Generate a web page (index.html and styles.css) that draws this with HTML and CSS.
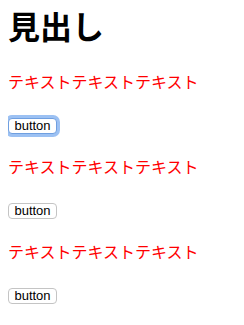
FILE: index.html
```html
<!DOCTYPE html>
<html lang="ja">
<head>
<meta charset="utf-8">
<link rel="stylesheet" href="styles.css">
</head>
<body>
<h1 class="title">見出し</h1>
<p class="text">テキストテキストテキスト</p>
<p class="row"><button class="btn btn-focus">button</button></p>
<p class="text">テキストテキストテキスト</p>
<p class="row"><button class="btn">button</button></p>
<p class="text">テキストテキストテキスト</p>
<p class="row"><button class="btn">button</button></p>
</body>
</html>
```
FILE: styles.css
```css
html, body {
  background: #fff;
}
body {
  margin: 8px;
  font-family: "Noto Sans CJK JP", sans-serif;
  color: #000;
}
.title {
  margin: 0;
  font-size: 32px;
  line-height: 34px;
  font-weight: 700;
}
.text {
  margin: 27px 0 0;
  font-size: 16px;
  line-height: 24px;
  color: #ff0000;
}
.row + .text {
  margin-top: 20px;
}
.row {
  margin: 25px 0 0;
  line-height: 16px;
  height: 16px;
}
.btn {
  display: block;
  box-sizing: border-box;
  width: 49px;
  height: 16px;
  padding: 0;
  margin: 0;
  font-family: "Liberation Sans", Arial, sans-serif;
  font-size: 13px;
  line-height: 14px;
  color: #000;
  background: #fff;
  border: 1px solid #c4c4c4;
  border-radius: 4px;
}
.btn-focus {
  border-color: #6f9fe0;
  box-shadow: 0 0 0 3px #9cc1f3;
}
```
